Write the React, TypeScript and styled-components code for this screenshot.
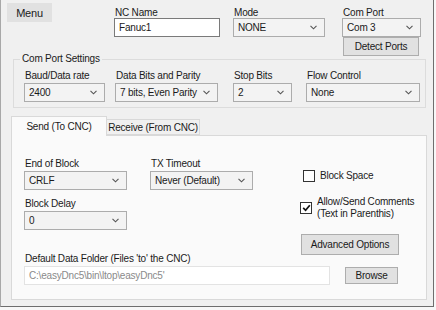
import styled, { createGlobalStyle } from 'styled-components';

const GlobalStyle = createGlobalStyle`
  html, body {
    margin: 0;
    padding: 0;
    background: #f4f4f4;
  }
  body {
    font-family: "Liberation Sans", Arial, sans-serif;
    font-size: 10px;
    letter-spacing: -0.2px;
    color: #1a1a1a;
  }
`;

const Chevron = () => (
  <svg width="7" height="5" viewBox="0 0 7 5">
    <path d="M0.5 0.8 L3.5 3.8 L6.5 0.8" fill="none" stroke="#555" strokeWidth="1.1" />
  </svg>
);

const Select = ({ value, width }: { value: string; width: number }) => (
  <SelectBox width={width}>
    <span>{value}</span>
    <Chevron />
  </SelectBox>
);

const App = () => {
  return (
    <Frame>
      <GlobalStyle />
      <Window>
        <TopRow>
          <MenuButton>Menu</MenuButton>
          <TopField width={106} gap={13}>
            <Label>NC Name</Label>
            <TextBox>Fanuc1</TextBox>
          </TopField>
          <TopField width={92} gap={17}>
            <Label>Mode</Label>
            <Select value="NONE" width={92} />
          </TopField>
          <TopField width={79} gap={0}>
            <Label>Com Port</Label>
            <Select value="Com 3" width={79} />
            <Button width={76} height={19} left={1} top={0}>Detect Ports</Button>
          </TopField>
        </TopRow>

        <GroupBox>
          <Legend>Com Port Settings</Legend>
          <GroupRow>
            <Field width={81} gap={10}>
              <Label>Baud/Data rate</Label>
              <Select value="2400" width={81} />
            </Field>
            <Field width={103} gap={15}>
              <Label>Data Bits and Parity</Label>
              <Select value="7 bits, Even Parity" width={103} />
            </Field>
            <Field width={59} gap={14}>
              <Label>Stop Bits</Label>
              <Select value="2" width={59} />
            </Field>
            <Field width={114} gap={0}>
              <Label>Flow Control</Label>
              <Select value="None" width={114} />
            </Field>
          </GroupRow>
        </GroupBox>

        <Tabs>
          <TabStrip>
            <Tab active>Send (To CNC)</Tab>
            <Tab>Receive (From CNC)</Tab>
          </TabStrip>
          <TabPanel>
            <LeftColumn>
              <SelectRow>
                <Field width={103} gap={23}>
                  <Label>End of Block</Label>
                  <Select value="CRLF" width={103} />
                </Field>
                <Field width={103} gap={0}>
                  <Label>TX Timeout</Label>
                  <Select value="Never (Default)" width={103} />
                </Field>
              </SelectRow>
              <Field width={103} gap={0} top={7}>
                <Label>Block Delay</Label>
                <Select value="0" width={103} />
              </Field>
              <Field width={306} gap={0} top={22}>
                <Label>Default Data Folder (Files 'to' the CNC)</Label>
                <TextBox muted>C:\easyDnc5\bin\ltop\easyDnc5'</TextBox>
              </Field>
            </LeftColumn>
            <RightColumn>
              <CheckRow top={13} left={3}>
                <CheckBox />
                <CheckLabel>Block Space</CheckLabel>
              </CheckRow>
              <CheckRow top={14} left={0}>
                <CheckBox>
                  <svg width="9" height="8" viewBox="0 0 9 8">
                    <path d="M1.2 3.8 L3.6 6.3 L7.8 1.2" fill="none" stroke="#111" strokeWidth="1.7" />
                  </svg>
                </CheckBox>
                <CheckLabel>
                  Allow/Send Comments
                  <br />
                  (Text in Parenthis)
                </CheckLabel>
              </CheckRow>
              <Button width={98} height={21} left={1} top={14}>Advanced Options</Button>
              <Button width={53} height={17} left={45} top={12}>Browse</Button>
            </RightColumn>
          </TabPanel>
        </Tabs>
      </Window>
    </Frame>
  );
};

export default App;

const Frame = styled.div`
  width: 436px;
  height: 310px;
  padding: 0 2px 3px 0;
  box-sizing: border-box;
  background: #f7f7f7;
`;

const Window = styled.div`
  height: 100%;
  box-sizing: border-box;
  background: #f0f0f0;
  border-left: 1px solid #a8a8a8;
  border-right: 1px solid #6e6e6e;
  border-bottom: 1px solid #6e6e6e;
`;

const TopRow = styled.div`
  display: flex;
  align-items: flex-start;
  padding: 3px 0 0 6px;
  height: 56px;
  box-sizing: border-box;
`;

const MenuButton = styled.div`
  width: 45px;
  height: 19px;
  margin-right: 62px;
  background: #e1e1e1;
  display: flex;
  align-items: center;
  justify-content: center;
  font-size: 11px;
`;

const Field = styled.div<{ width: number; gap: number; top?: number }>`
  display: flex;
  flex-direction: column;
  width: ${(p) => p.width}px;
  margin-right: ${(p) => p.gap}px;
  margin-top: ${(p) => p.top ?? 0}px;
  flex-shrink: 0;
`;

const TopField = styled(Field)`
  padding-top: 1px;

  & > div:first-child {
    height: 14px;
    line-height: 17px;
  }
`;

const Label = styled.div`
  height: 14px;
  line-height: 14px;
  padding-left: 1px;
  white-space: nowrap;
`;

const TextBox = styled.div<{ muted?: boolean }>`
  height: 19px;
  box-sizing: border-box;
  border: 1px solid ${(p) => (p.muted ? '#e3e3e3' : '#7a7a7a')};
  background: #fff;
  padding: 0 4px;
  line-height: 17px;
  color: ${(p) => (p.muted ? '#8a8a8a' : '#1a1a1a')};
  white-space: nowrap;
  overflow: hidden;
`;

const SelectBox = styled.div<{ width: number }>`
  width: ${(p) => p.width}px;
  height: 19px;
  box-sizing: border-box;
  border: 1px solid #acacac;
  background: #f3f3f3;
  display: flex;
  align-items: center;
  justify-content: space-between;
  padding: 0 7px 0 4px;
  white-space: nowrap;
`;

const Button = styled.div<{ width: number; height: number; left: number; top: number }>`
  width: ${(p) => p.width}px;
  height: ${(p) => p.height}px;
  margin-left: ${(p) => p.left}px;
  margin-top: ${(p) => p.top}px;
  box-sizing: border-box;
  border: 1px solid #adadad;
  background: #e1e1e1;
  display: flex;
  align-items: center;
  justify-content: center;
  white-space: nowrap;
`;

const GroupBox = styled.fieldset`
  margin: 0 7px 0 12px;
  padding: 7px 0 5px 10px;
  border: 1px solid #dcdcdc;
  min-width: 0;
`;

const Legend = styled.legend`
  padding: 0 2px;
  margin-left: -4px;
  line-height: 6px;
  height: 6px;
`;

const GroupRow = styled.div`
  display: flex;
  align-items: flex-start;
`;

const Tabs = styled.div`
  margin: 8px 6px 0 10px;
`;

const TabStrip = styled.div`
  display: flex;
  align-items: flex-end;
  height: 19px;
  position: relative;
  z-index: 1;
`;

const Tab = styled.div<{ active?: boolean }>`
  height: ${(p) => (p.active ? 20 : 16)}px;
  width: ${(p) => (p.active ? 96 : 94)}px;
  box-sizing: border-box;
  border: 1px solid #d9d9d9;
  border-bottom: ${(p) => (p.active ? 'none' : '1px solid #d9d9d9')};
  background: ${(p) => (p.active ? '#fafafa' : '#f0f0f0')};
  margin-bottom: ${(p) => (p.active ? -1 : 0)}px;
  margin-left: ${(p) => (p.active ? 0 : -1)}px;
  display: flex;
  align-items: center;
  justify-content: center;
  white-space: nowrap;
`;

const TabPanel = styled.div`
  height: 165px;
  box-sizing: border-box;
  border: 1px solid #d9d9d9;
  background: #fafafa;
  padding: 21px 0 0 12px;
  display: grid;
  grid-template-columns: 276px auto;
  align-items: start;
`;

const LeftColumn = styled.div`
  display: flex;
  flex-direction: column;
`;

const SelectRow = styled.div`
  display: flex;
`;

const RightColumn = styled.div`
  display: flex;
  flex-direction: column;
  align-items: flex-start;
`;

const CheckRow = styled.div<{ top: number; left: number }>`
  display: flex;
  align-items: center;
  margin-top: ${(p) => p.top}px;
  margin-left: ${(p) => p.left}px;
`;

const CheckBox = styled.div`
  width: 12px;
  height: 12px;
  box-sizing: border-box;
  border: 1px solid #333;
  background: #fff;
  margin-right: 5px;
  display: flex;
  align-items: center;
  justify-content: center;
  flex-shrink: 0;
`;

const CheckLabel = styled.div`
  line-height: 12px;
  white-space: nowrap;
`;
